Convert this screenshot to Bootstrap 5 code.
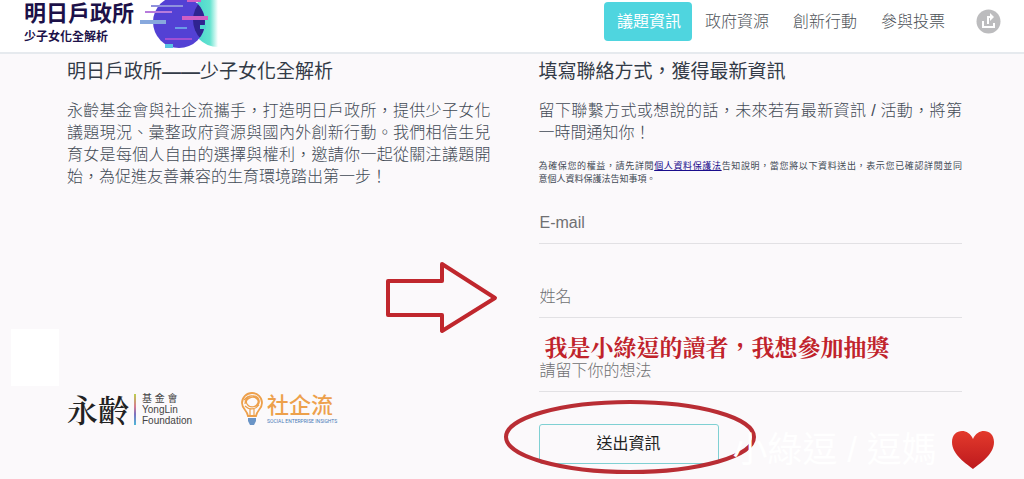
<!DOCTYPE html>
<html lang="zh-Hant">
<head>
<meta charset="utf-8">
<meta name="viewport" content="width=device-width, initial-scale=1">
<title>明日戶政所——少子女化全解析</title>
<link href="https://cdn.jsdelivr.net/npm/bootstrap@5.3.0/dist/css/bootstrap.min.css" rel="stylesheet">
<style>
  body { background: #fbf9fb; color: #424a55; font: 300 16px/22px "Liberation Sans", "Noto Sans CJK TC", sans-serif; overflow-x: hidden; }
  .site-header { background: #fff; height: 54px; border-bottom: 2px solid #e6eaee; padding: 0 23px 0 24px; overflow: hidden; }
  .brand { color: #1c1148; height: 52px; }
  .brand-name { font-size: 22px; line-height: 28px; font-weight: 700; }
  .brand-sub { font-size: 12px; line-height: 18px; font-weight: 700; }
  .site-nav { margin-top: 2px; }
  .site-nav .nav-link { color: #4c5157; padding: 9px 12px 8px 13px; height: 39px; border-radius: 4px; width: 88px; white-space: nowrap; }
  .site-nav .nav-link.active { background: #4fd5df; color: #fff; font-weight: 400; }
  .share { margin: 7px 0 0 20px; }
  main { padding: 5px 62px 15px 67px; }
  .topic { font-size: 19px; line-height: 22px; font-weight: 400; color: #333b47; margin: 0 0 19px; font-family: "Noto Sans CJK TC", sans-serif; }
  .dash { font-family: "Liberation Sans", sans-serif; font-weight: 700; line-height: 1; }
  .intro { text-align: justify; margin-bottom: 16px; }
  .terms { font-size: 9px; line-height: 13px; font-weight: 400; margin-bottom: 16px; }
  .terms a { color: #1a0d8c; }
  .full-line { display: block; text-align-last: justify; white-space: nowrap; }
  .field { height: 42px; margin-bottom: 32px; padding: 10px 1px 9px; border: 0; border-bottom: 1px solid #e2e1e4; border-radius: 0; background: transparent; font-size: 16px; line-height: 22px; font-weight: 300; resize: none; overflow: hidden; }
  .field:focus { background: transparent; box-shadow: none; }
  .field::placeholder { color: #6f7072; opacity: 1; }
  .send { width: 180px; height: 40px; border: 1px solid #7fd0d3; border-radius: 3px; color: #222; padding: 0; font-weight: 400; }
  .partners { margin-bottom: 36px; }
  .yl-mark { font-size: 31px; line-height: 38px; color: #222; font-weight: 600; font-family: "Noto Serif CJK TC", "Noto Sans CJK TC", serif; }
  .yl-bar { width: 2px; height: 31px; margin: 0 6px 0 5px; background: linear-gradient(#bcd04c, #d77b90 40%, #7c70c0 65%, #4eb8d8); }
  .yl-name { font: 400 10px/11px "Liberation Sans", "Noto Sans CJK TC", sans-serif; color: #444; }
  .se-link { margin-left: 49px; }
  .se-name { font-size: 22px; line-height: 24px; font-weight: 500; color: #eda04b; }
  .se-sub { font: 400 5px/6px Roboto, sans-serif; color: #4a7cb8; }
  .blank-tile { left: -56px; top: 270px; width: 48px; height: 57px; background: #fff; }
  .arrow { left: -154px; top: 202px; }
  .hand-note { left: 6px; top: 275px; font-size: 23px; line-height: 26px; font-weight: 700; font-family: "AR PL UKai TW", "Noto Serif CJK TC", "Noto Sans CJK TC", serif; color: #c0232b; white-space: nowrap; }
  .ring { left: -36px; top: 340px; pointer-events: none; }
  .watermark { left: 194px; top: 366px; font-size: 35px; line-height: 50px; font-weight: 400; color: #fff; white-space: nowrap; pointer-events: none; }
  .heart { margin-left: 15px; }
</style>
</head>
<body>
<header class="site-header d-flex justify-content-between align-items-start">
  <a class="brand d-flex text-decoration-none" href="#">
    <span class="d-flex flex-column">
      <span class="brand-name">明日戶政所</span>
      <span class="brand-sub">少子女化全解析</span>
    </span>
    <svg width="84" height="52" viewBox="0 0 84 52" class="ms-1" aria-hidden="true">
      <defs><linearGradient id="mint" x1="0" x2="1"><stop offset="0" stop-color="#3fd0cc"/><stop offset=".7" stop-color="#63e3cf"/><stop offset="1" stop-color="#fff"/></linearGradient>
      <clipPath id="moon"><circle cx="82" cy="20" r="27"/></clipPath></defs>
      <path d="M80-7A27 27 0 0 0 80 47Z" fill="url(#mint)"/>
      <circle cx="41" cy="22" r="26" fill="#5341d4"/>
      <circle cx="41" cy="22" r="26" fill="#2f2490" clip-path="url(#moon)"/>
      <g fill="#d05fc4"><rect x="49" y="0" width="14" height="2"/><rect x="44" y="16" width="26" height="4"/><rect x="27" y="38" width="27" height="2" fill="#a14fd3"/><rect x="7" y="11" width="27" height="2" fill="#b77bdc"/></g>
      <rect x="13" y="5" width="32" height="2" fill="#8f91dd"/><rect x="2" y="20" width="26" height="4" fill="#87a8dd"/><rect x="37" y="27" width="12" height="2" fill="#6a9be6"/><rect x="27" y="44" width="8" height="4" fill="#58c4e2"/><rect x="62" y="25" width="6" height="4" fill="#50d8d0"/>
    </svg>
  </a>
  <nav class="site-nav d-flex" aria-label="主選單">
    <a class="nav-link active" href="#">議題資訊</a>
    <a class="nav-link" href="#">政府資源</a>
    <a class="nav-link" href="#">創新行動</a>
    <a class="nav-link" href="#">參與投票</a>
    <a class="share" href="#" aria-label="分享">
      <svg class="d-block" width="25" height="25" viewBox="0 0 25 25"><circle cx="12.500" cy="12.500" r="12" fill="#bcbcbe"/><path d="M7 12v6h11v-4M12 15V8h3" fill="none" stroke="#fff" stroke-width="2"/><path d="M14 4l4 4-4 4Z" fill="#fff"/></svg>
    </a>
  </nav>
</header>

<main>
  <div class="row gx-5">
    <section class="col-6 d-flex flex-column">
      <div class="position-relative flex-grow-1 d-flex flex-column">
        <h2 class="topic">明日戶政所<span class="dash">——</span>少子女化全解析</h2>
        <p class="intro">永齡基金會與社企流攜手，打造明日戶政所，提供少子女化議題現況、彙整政府資源與國內外創新行動。我們相信生兒育女是每個人自由的選擇與權利，邀請你一起從關注議題開始，為促進友善兼容的生育環境踏出第一步！</p>
        <div class="blank-tile position-absolute"></div>
        <div class="partners mt-auto d-flex align-items-center">
          <a class="d-flex align-items-center text-decoration-none" href="#">
            <span class="yl-mark">永齡</span><span class="yl-bar"></span>
            <span class="yl-name">基 金 會<br>YongLin<br>Foundation</span>
          </a>
          <a class="se-link d-flex align-items-center text-decoration-none" href="#">
            <svg width="22" height="34" viewBox="0 0 22 34" aria-hidden="true"><g fill="none" stroke="#eda04b"><path d="M7 24C6 18 1 17 1 11a10 10 0 0 1 20 0c0 6-5 7-6 13Z" stroke-width="1.800"/><path d="M4 12C4 3 16 1 18 8s-9 9-12 4 6-9 10-5-3 10-8 7M3 8c5-6 12-5 15 1M4 14c4 4 10 4 14-1M9 17v6M13 17v6" stroke-width="1.200"/></g><path d="M7 26h8v3l-2 4H9l-2-4Z" fill="#6a94c6"/></svg>
            <span class="d-flex flex-column ms-1"><span class="se-name">社企流</span><span class="se-sub">SOCIAL ENTERPRISE INSIGHTS</span></span>
          </a>
        </div>
      </div>
    </section>

    <section class="col-6">
      <div class="position-relative">
        <h2 class="topic">填寫聯絡方式，獲得最新資訊</h2>
        <p class="intro">留下聯繫方式或想說的話，未來若有最新資訊 / 活動，將第一時間通知你！</p>
        <p class="terms"><span class="full-line">為確保您的權益，請先詳閱<a href="#">個人資料保護法</a>告知說明，當您將以下資料送出，表示您已確認詳閱並同</span>意個人資料保護法告知事項。</p>
        <form>
          <input class="field form-control" type="email" placeholder="E-mail" aria-label="E-mail">
          <input class="field form-control" type="text" placeholder="姓名" aria-label="姓名">
          <textarea class="field form-control" rows="1" placeholder="請留下你的想法" aria-label="請留下你的想法"></textarea>
          <button class="send btn" type="button">送出資訊</button>
        </form>
        <svg class="arrow position-absolute" width="114" height="76" viewBox="0 0 114 76" aria-hidden="true"><path d="M3 20H57V3L110 37 57 70V54H3Z" fill="none" stroke="#c0272d" stroke-width="4" stroke-linejoin="round"/></svg>
        <div class="hand-note position-absolute">我是小綠逗的讀者，我想參加抽獎</div>
        <svg class="ring position-absolute" width="256" height="76" viewBox="0 0 256 76" aria-hidden="true"><ellipse cx="127" cy="38" rx="124" ry="35" fill="none" stroke="#b92d34" stroke-width="4"/></svg>
        <div class="watermark position-absolute d-flex align-items-center">小綠逗 / 逗媽
          <svg class="heart" width="42" height="38" viewBox="0 0 42 38" aria-hidden="true"><defs><linearGradient id="red" x2="0" y2="1"><stop stop-color="#e33a2c"/><stop offset="1" stop-color="#bd191d"/></linearGradient></defs><path d="M21 38C15 33 0 24 0 11 0-2 16-4 21 8 26-4 42-2 42 11 42 24 27 33 21 38Z" fill="url(#red)"/></svg>
        </div>
      </div>
    </section>
  </div>
</main>
<script src="https://cdn.jsdelivr.net/npm/bootstrap@5.3.0/dist/js/bootstrap.bundle.min.js"></script>
</body>
</html>
